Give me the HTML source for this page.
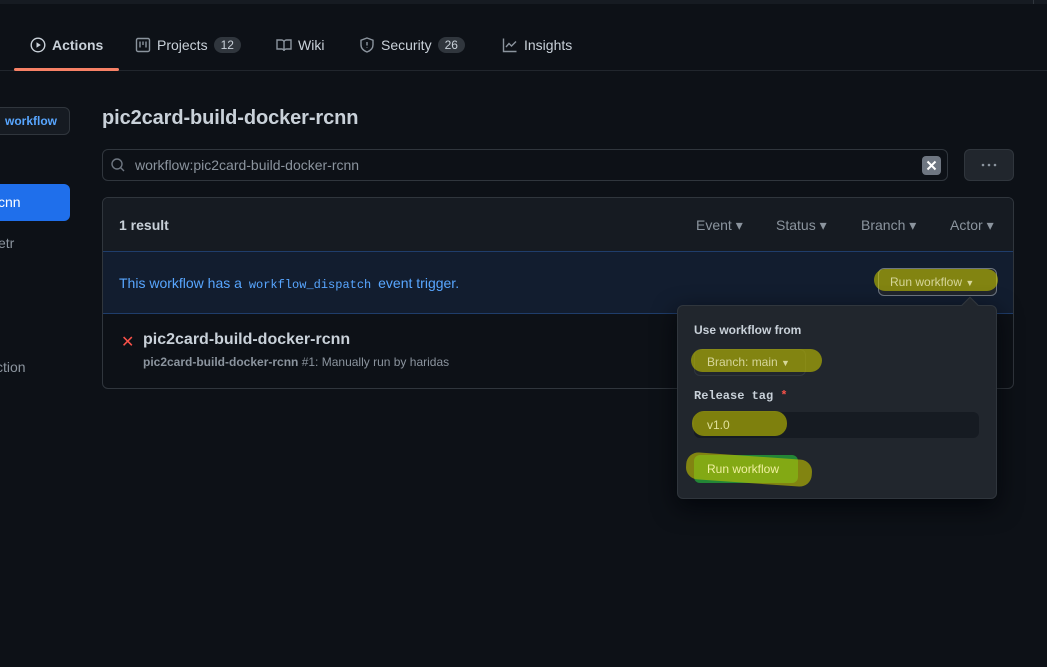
<!DOCTYPE html>
<html><head><style>
*{box-sizing:border-box;margin:0;padding:0}
body{width:1047px;height:667px;background:#0d1117;font-family:"Liberation Sans",sans-serif;color:#c9d1d9;position:relative;overflow:hidden;font-size:14px}
.a{position:absolute}
.tab{position:absolute;top:37px;font-size:14px;color:#c9d1d9;display:flex;align-items:center;gap:6px}
.cnt{background:#30363d;border-radius:10px;padding:1px 7px;font-size:12px;color:#c9d1d9}
.mono{font-family:"Liberation Mono",monospace}
.hl{position:absolute;background:rgba(190,190,0,0.62);border-radius:12px}
.flt{position:absolute;top:217px;color:#8b949e;font-size:14px}
</style></head><body>
<div class="a" style="left:0;top:0;width:1047px;height:4px;background:#161b22"></div>
<div class="a" style="left:1033px;top:0;width:1px;height:4px;background:#30363d"></div>

<div class="tab" style="left:30px;font-weight:bold"><svg width="16" height="16" viewBox="0 0 16 16"><circle cx="8" cy="8" r="6.8" fill="none" stroke="#c9d1d9" stroke-width="1.4"/><path d="M6.5 5.2v5.6L10.8 8z" fill="#c9d1d9"/></svg>Actions</div>
<div class="tab" style="left:135px"><svg width="16" height="16" viewBox="0 0 16 16" fill="none" stroke="#8b949e" stroke-width="1.4"><rect x="1.5" y="1.5" width="13" height="13" rx="1.5"/><path d="M5 4.5v6M8 4.5v3.5M11 4.5v6"/></svg>Projects <span class="cnt">12</span></div>
<div class="tab" style="left:276px"><svg width="16" height="16" viewBox="0 0 16 16" fill="none" stroke="#8b949e" stroke-width="1.4"><path d="M1 3h4.5c1.3 0 2.5 1 2.5 2.3V14c0-1-1-2-2.3-2H1zM15 3h-4.5C9.2 3 8 4 8 5.3V14c0-1 1-2 2.3-2H15z"/></svg>Wiki</div>
<div class="tab" style="left:359px"><svg width="16" height="16" viewBox="0 0 16 16" fill="none" stroke="#8b949e" stroke-width="1.4"><path d="M8 1l6 2.2v4.5c0 3.5-2.7 6-6 7.3-3.3-1.3-6-3.8-6-7.3V3.2z"/><path d="M8 5v3.5M8 10.3v.5"/></svg>Security <span class="cnt">26</span></div>
<div class="tab" style="left:502px"><svg width="16" height="16" viewBox="0 0 16 16" fill="none" stroke="#8b949e" stroke-width="1.4"><path d="M1.5 1.5v13h13M4 10l3-3.5 2.5 2.5L14 4.5"/></svg>Insights</div>
<div class="a" style="left:0;top:70px;width:1047px;height:1px;background:#21262d"></div>
<div class="a" style="left:14px;top:68px;width:105px;height:3px;background:#f78166;border-radius:2px"></div>

<div class="a" style="left:-10px;top:107px;width:80px;height:28px;border:1px solid #30363d;background:#161b22;border-radius:6px;color:#58a6ff;font-size:12px;font-weight:bold;line-height:26px;text-align:right;padding-right:12px">workflow</div>
<div class="a" style="left:-10px;top:184px;width:80px;height:37px;background:#1f6feb;border-radius:6px;color:#fff;font-size:14px;line-height:37px;padding-left:8px">cnn</div>
<div class="a" style="left:-2px;top:235px;color:#8b949e">etr</div>
<div class="a" style="left:-4px;top:359px;color:#8b949e">ction</div>

<div class="a" style="left:102px;top:107px;font-size:20px;font-weight:bold;letter-spacing:-0.1px">pic2card-build-docker-rcnn</div>

<div class="a" style="left:102px;top:149px;width:846px;height:32px;border:1px solid #30363d;border-radius:6px;background:#0d1117"></div>
<svg class="a" style="left:110px;top:157px" width="16" height="16" viewBox="0 0 16 16" fill="none" stroke="#6e7681" stroke-width="1.4"><circle cx="7" cy="7" r="5"/><path d="M10.6 10.6L14 14"/></svg>
<div class="a" style="left:135px;top:157px;color:#8b949e;font-size:14px">workflow:pic2card-build-docker-rcnn</div>
<div class="a" style="left:922px;top:156px;width:19px;height:19px;background:#6e7681;border-radius:4px"></div>
<svg class="a" style="left:922px;top:156px" width="19" height="19" viewBox="0 0 19 19" stroke="#fff" stroke-width="2"><path d="M5.5 5.5l8 8M13.5 5.5l-8 8"/></svg>
<div class="a" style="left:964px;top:149px;width:50px;height:32px;border:1px solid #30363d;border-radius:6px;background:#21262d"></div>
<svg class="a" style="left:964px;top:149px" width="50" height="32"><circle cx="19" cy="16" r="1.3" fill="#8b949e"/><circle cx="25" cy="16" r="1.3" fill="#8b949e"/><circle cx="31" cy="16" r="1.3" fill="#8b949e"/></svg>

<div class="a" style="left:102px;top:197px;width:912px;height:192px;border:1px solid #30363d;border-radius:6px;overflow:hidden;background:#0d1117">
 <div class="a" style="left:0;top:0;width:912px;height:54px;background:#161b22"></div>
 <div class="a" style="left:0;top:53px;width:912px;height:63px;background:#121d2f;border-top:1px solid #1f3d6b;border-bottom:1px solid #1f3d6b"></div>
</div>
<div class="a" style="left:119px;top:217px;font-weight:bold;font-size:14px">1 result</div>
<div class="flt" style="left:696px">Event ▾</div>
<div class="flt" style="left:776px">Status ▾</div>
<div class="flt" style="left:861px">Branch ▾</div>
<div class="flt" style="left:950px">Actor ▾</div>
<div class="a" style="left:119px;top:275px;color:#58a6ff;font-size:14px">This workflow has a <span class="mono" style="font-size:12px;padding:0 3px">workflow_dispatch</span> event trigger.</div>

<div class="a" style="left:121px;top:332px;color:#f85149;font-size:16px">✕</div>
<div class="a" style="left:143px;top:331px;font-size:16px;font-weight:bold">pic2card-build-docker-rcnn</div>
<div class="a" style="left:143px;top:355px;font-size:12px;color:#8b949e"><b>pic2card-build-docker-rcnn</b> #1: Manually run by haridas</div>

<div class="a" style="left:878px;top:268px;width:119px;height:28px;border:1px solid #6e7681;border-radius:6px;background:#21262d"></div>
<div class="hl" style="left:874px;top:269px;width:124px;height:22px"></div>
<div class="a" style="left:890px;top:275px;font-size:12px;color:#d6d69a">Run workflow <span style="font-size:9px">▼</span></div>

<div class="a" style="left:677px;top:305px;width:320px;height:194px;background:#21262d;border:1px solid #30363d;border-radius:6px;box-shadow:0 8px 24px rgba(1,4,9,.8)"></div>
<div class="a" style="left:964px;top:299px;width:12px;height:12px;background:#21262d;border-left:1px solid #30363d;border-top:1px solid #30363d;transform:rotate(45deg)"></div>
<div class="a" style="left:694px;top:323px;font-size:12px;font-weight:bold">Use workflow from</div>
<div class="a" style="left:694px;top:349px;width:112px;height:27px;border:1px solid #30363d;border-radius:6px;background:#21262d"></div>
<div class="hl" style="left:691px;top:349px;width:131px;height:23px"></div>
<div class="a" style="left:707px;top:355px;font-size:12px;color:#d6d69a">Branch: main <span style="font-size:9px">▼</span></div>
<div class="a mono" style="left:694px;top:389px;font-size:12px;font-weight:bold">Release tag <span style="color:#f85149">*</span></div>
<div class="a" style="left:694px;top:412px;width:285px;height:26px;background:#161b22;border-radius:6px"></div>
<div class="hl" style="left:692px;top:411px;width:95px;height:25px"></div>
<div class="a" style="left:707px;top:418px;font-size:12px;color:#e0e09a">v1.0</div>
<div class="a" style="left:694px;top:455px;width:104px;height:28px;background:#238636;border-radius:6px"></div>
<div class="hl" style="left:686px;top:456px;width:126px;height:27px;transform:rotate(4deg)"></div>
<div class="a" style="left:707px;top:462px;font-size:12px;color:#f0f0a0">Run workflow</div>
</body></html>
